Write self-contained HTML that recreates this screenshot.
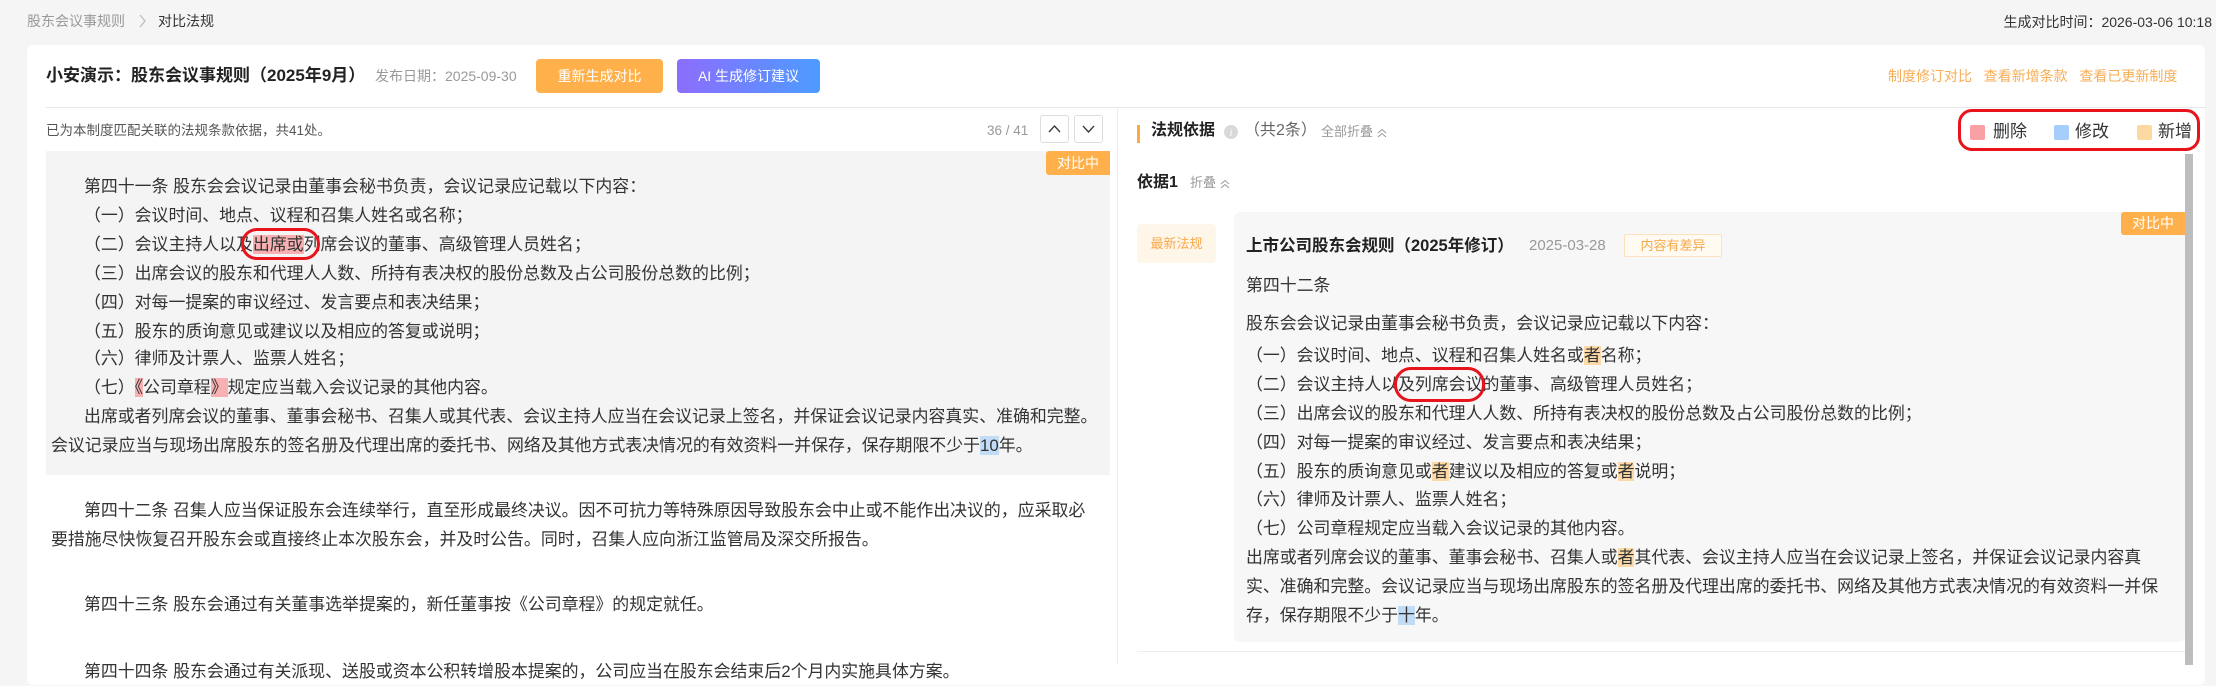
<!DOCTYPE html>
<html><head><meta charset="utf-8"><style>
*{margin:0;padding:0;box-sizing:border-box}
body{width:2216px;height:665px;overflow:hidden;background:#f5f5f5;font-family:"Liberation Sans","Noto Sans CJK SC",sans-serif;color:#333;position:relative}
.a{position:absolute;white-space:nowrap}
.t{position:absolute;white-space:nowrap;font-size:16.9px;line-height:29px;color:#333}
.del{background:#f9b0b2}
.mod{background:#c2dcf6}
.add{background:#fcd9a6}
.chev{display:inline-block;width:10px;height:10px;vertical-align:middle;margin-left:4px}
</style></head><body>
<div class="a" style="left:27px;top:11px;font-size:14px;line-height:20px;color:#999">股东会议事规则</div>
<svg class="a" style="left:139px;top:14px" width="8" height="14"><path d="M1 1 L6 7 L1 13" stroke="#bbb" fill="none" stroke-width="1.2"/></svg>
<div class="a" style="left:158px;top:11px;font-size:14px;line-height:20px;color:#333">对比法规</div>
<div class="a" style="right:4px;top:12px;font-size:14px;line-height:20px;color:#333">生成对比时间：2026-03-06 10:18</div>

<div class="a" style="left:27px;top:45px;width:2178px;height:640px;background:#fff;border-radius:6px"></div>
<div class="a" style="left:46px;top:64px;font-size:17px;font-weight:bold;line-height:24px;color:#222">小安演示：股东会议事规则（2025年9月）</div>
<div class="a" style="left:375px;top:66px;font-size:14px;line-height:20px;color:#999">发布日期：2025-09-30</div>
<div class="a" style="left:536px;top:59px;width:127px;height:34px;background:#ffb04a;border-radius:4px;color:#fff;font-size:14px;line-height:34px;text-align:center">重新生成对比</div>
<div class="a" style="left:677px;top:59px;width:143px;height:34px;background:linear-gradient(90deg,#8c6dfd,#4d9cff);border-radius:4px;color:#fff;font-size:14px;line-height:34px;text-align:center">AI 生成修订建议</div>
<div class="a" style="left:1888px;top:66px;font-size:14px;line-height:20px;color:#f7ad55;word-spacing:0">制度修订对比&nbsp;&nbsp;&nbsp;查看新增条款&nbsp;&nbsp;&nbsp;查看已更新制度</div>
<div class="a" style="left:46px;top:107px;width:2160px;height:1px;background:#e8e8e8"></div>

<!-- left panel -->
<div class="a" style="left:46px;top:122px;font-size:13.5px;line-height:18px;color:#555">已为本制度匹配关联的法规条款依据，共41处。</div>
<div class="a" style="left:987px;top:122px;font-size:13.5px;line-height:18px;color:#999">36 / 41</div>
<div class="a" style="left:1040px;top:115px;width:29px;height:28px;border:1px solid #ddd;border-radius:3px"><svg width="27" height="26"><path d="M8 16 L13.5 10 L19 16" stroke="#333" fill="none" stroke-width="1.3"/></svg></div>
<div class="a" style="left:1074px;top:115px;width:29px;height:28px;border:1px solid #ddd;border-radius:3px"><svg width="27" height="26"><path d="M8 10 L13.5 16 L19 10" stroke="#333" fill="none" stroke-width="1.3"/></svg></div>
<div class="a" style="left:46px;top:151px;width:1064px;height:324px;background:#f4f4f4"></div>
<div class="a" style="left:1046px;top:151px;width:64px;height:24px;background:#ffb04a;color:#fff;font-size:14px;line-height:24px;text-align:center;border-radius:3px 0 0 3px">对比中</div>
<div class="t" style="left:84px;top:172px">第四十一条&nbsp;股东会会议记录由董事会秘书负责，会议记录应记载以下内容：</div>
<div class="t" style="left:84px;top:201px">（一）会议时间、地点、议程和召集人姓名或名称；</div>
<div class="t" style="left:84px;top:230px">（二）会议主持人以及<span class="del">出席或</span>列席会议的董事、高级管理人员姓名；</div>
<div class="t" style="left:84px;top:259px">（三）出席会议的股东和代理人人数、所持有表决权的股份总数及占公司股份总数的比例；</div>
<div class="t" style="left:84px;top:288px">（四）对每一提案的审议经过、发言要点和表决结果；</div>
<div class="t" style="left:84px;top:317px">（五）股东的质询意见或建议以及相应的答复或说明；</div>
<div class="t" style="left:84px;top:344px">（六）律师及计票人、监票人姓名；</div>
<div class="t" style="left:84px;top:373px">（七）<span class="del">《</span>公司章程<span class="del">》</span>规定应当载入会议记录的其他内容。</div>
<div class="t" style="left:84px;top:402px">出席或者列席会议的董事、董事会秘书、召集人或其代表、会议主持人应当在会议记录上签名，并保证会议记录内容真实、准确和完整。</div>
<div class="t" style="left:51px;top:431px">会议记录应当与现场出席股东的签名册及代理出席的委托书、网络及其他方式表决情况的有效资料一并保存，保存期限不少于<span class="mod">10</span>年。</div>
<div class="a" style="left:241px;top:228px;width:79px;height:32px;border:3px solid #e8141b;border-radius:16px"></div>
<div class="t" style="left:84px;top:496px">第四十二条&nbsp;召集人应当保证股东会连续举行，直至形成最终决议。因不可抗力等特殊原因导致股东会中止或不能作出决议的，应采取必</div>
<div class="t" style="left:51px;top:525px">要措施尽快恢复召开股东会或直接终止本次股东会，并及时公告。同时，召集人应向浙江监管局及深交所报告。</div>
<div class="t" style="left:84px;top:590px">第四十三条&nbsp;股东会通过有关董事选举提案的，新任董事按《公司章程》的规定就任。</div>
<div class="t" style="left:84px;top:657px">第四十四条&nbsp;股东会通过有关派现、送股或资本公积转增股本提案的，公司应当在股东会结束后2个月内实施具体方案。</div>

<!-- right panel -->
<div class="a" style="left:1117px;top:108px;width:1px;height:557px;background:#eee"></div>
<div class="a" style="left:1137px;top:125px;width:3px;height:18px;background:#ffa940"></div>
<div class="a" style="left:1151px;top:121px;font-size:16px;font-weight:bold;line-height:20px;color:#222">法规依据</div>
<svg class="a" style="left:1224px;top:125px" width="14" height="14"><circle cx="7" cy="7" r="7" fill="#d9d9d9"/><text x="7" y="11" font-size="10" fill="#fff" text-anchor="middle" font-style="italic" font-family="Liberation Serif">i</text></svg>
<div class="a" style="left:1244px;top:121px;font-size:16px;line-height:20px;color:#666">（共2条）</div>
<div class="a" style="left:1321px;top:123px;font-size:13px;line-height:18px;color:#999">全部折叠<svg class="chev" viewBox="0 0 10 10"><path d="M1 5 L5 1.5 L9 5 M1 9 L5 5.5 L9 9" stroke="#999" fill="none" stroke-width="1"/></svg></div>
<div class="a" style="left:1958px;top:109px;width:242px;height:42px;border:3px solid #e8141b;border-radius:14px"></div>
<div class="a" style="left:1970px;top:125px;width:15px;height:15px;background:#f9a0a4;border-radius:2px"></div>
<div class="a" style="left:1993px;top:120px;font-size:17px;line-height:24px">删除</div>
<div class="a" style="left:2054px;top:125px;width:15px;height:15px;background:#a6cdfc;border-radius:2px"></div>
<div class="a" style="left:2075px;top:120px;font-size:17px;line-height:24px">修改</div>
<div class="a" style="left:2137px;top:125px;width:15px;height:15px;background:#fdd9a2;border-radius:2px"></div>
<div class="a" style="left:2158px;top:120px;font-size:17px;line-height:24px">新增</div>
<div class="a" style="left:2185px;top:154px;width:8px;height:511px;background:#bdbdbd"></div>
<div class="a" style="left:1137px;top:173px;font-size:16px;font-weight:bold;line-height:20px;color:#222">依据1</div>
<div class="a" style="left:1190px;top:174px;font-size:13px;line-height:18px;color:#999">折叠<svg class="chev" viewBox="0 0 10 10"><path d="M1 5 L5 1.5 L9 5 M1 9 L5 5.5 L9 9" stroke="#999" fill="none" stroke-width="1"/></svg></div>
<div class="a" style="left:1137px;top:224px;width:79px;height:39px;background:#fff6ea;border-radius:4px;color:#f7a94a;font-size:13px;line-height:39px;text-align:center">最新法规</div>
<div class="a" style="left:1234px;top:212px;width:951px;height:430px;background:#f7f7f7;border-radius:6px"></div>
<div class="a" style="left:2121px;top:212px;width:64px;height:23px;background:#ffb04a;color:#fff;font-size:14px;line-height:23px;text-align:center;border-radius:3px 0 0 3px">对比中</div>
<div class="a" style="left:1246px;top:235px;font-size:16.5px;font-weight:bold;line-height:22px;color:#222">上市公司股东会规则（2025年修订）</div>
<div class="a" style="left:1529px;top:236px;font-size:15px;line-height:20px;color:#999">2025-03-28</div>
<div class="a" style="left:1624px;top:234px;width:98px;height:23px;border:1px solid #fde2bd;background:#fffaf2;color:#f7a94a;font-size:13px;line-height:21px;text-align:center;border-radius:2px">内容有差异</div>
<div class="t" style="left:1246px;top:271px">第四十二条</div>
<div class="t" style="left:1246px;top:309px">股东会会议记录由董事会秘书负责，会议记录应记载以下内容：</div>
<div class="t" style="left:1246px;top:341px">（一）会议时间、地点、议程和召集人姓名或<span class="add">者</span>名称；</div>
<div class="t" style="left:1246px;top:370px">（二）会议主持人以及列席会议的董事、高级管理人员姓名；</div>
<div class="t" style="left:1246px;top:399px">（三）出席会议的股东和代理人人数、所持有表决权的股份总数及占公司股份总数的比例；</div>
<div class="t" style="left:1246px;top:428px">（四）对每一提案的审议经过、发言要点和表决结果；</div>
<div class="t" style="left:1246px;top:457px">（五）股东的质询意见或<span class="add">者</span>建议以及相应的答复或<span class="add">者</span>说明；</div>
<div class="t" style="left:1246px;top:485px">（六）律师及计票人、监票人姓名；</div>
<div class="t" style="left:1246px;top:514px">（七）公司章程规定应当载入会议记录的其他内容。</div>
<div class="t" style="left:1246px;top:543px">出席或者列席会议的董事、董事会秘书、召集人或<span class="add">者</span>其代表、会议主持人应当在会议记录上签名，并保证会议记录内容真</div>
<div class="t" style="left:1246px;top:572px">实、准确和完整。会议记录应当与现场出席股东的签名册及代理出席的委托书、网络及其他方式表决情况的有效资料一并保</div>
<div class="t" style="left:1246px;top:601px">存，保存期限不少于<span class="mod">十</span>年。</div>
<div class="a" style="left:1394px;top:367px;width:91px;height:35px;border:3px solid #e8141b;border-radius:17px"></div>
<div class="a" style="left:1137px;top:651px;width:1048px;height:1px;background:#eee"></div>
</body></html>
